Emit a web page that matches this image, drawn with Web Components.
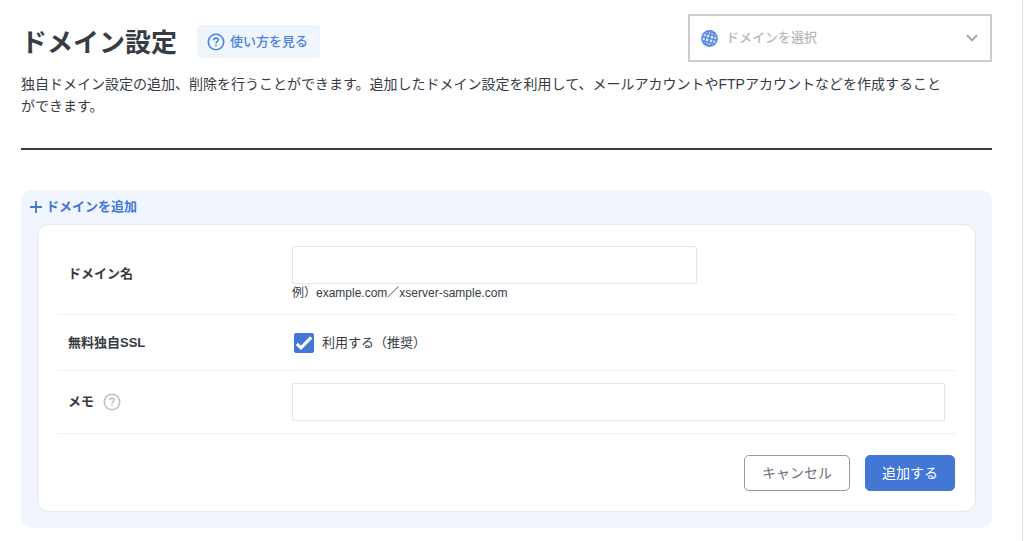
<!DOCTYPE html>
<html lang="ja">
<head>
<meta charset="utf-8">
<meta name="viewport" content="width=device-width, initial-scale=1">
<title>ドメイン設定</title>
<style>
  html {
    --ink: #363b44;
    --blue: #4277d6;
    --line: #e8e8e8;
    background: #fff;
  }
  body {
    margin: 0 1px 0 0;
    color: var(--ink);
    font: 13px/22px "Liberation Sans", "Noto Sans CJK JP", sans-serif;
  }
</style>
</head>
<body>
<domain-page></domain-page>

<template id="t-page">
  <style>
    :host { display: block; box-sizing: border-box; min-height: 100vh; padding: 14px 30px 13px 21px; border-right: 1px solid #e0e0e0; }
    header { display: flex; align-items: center; gap: 20px; }
    h1 { margin: 0; font-size: 26px; line-height: 36px; padding-top: 8px; }
    domain-picker { margin-left: auto; margin-bottom: 1px; }
    p { margin: 10px 0 0; font-size: 14px; line-height: 22px; }
    hr { margin: 31px 0 40px; border: 0; height: 2px; background: var(--ink); }
    help-link { margin-top: 6px; }
  </style>
  <header>
    <h1>ドメイン設定</h1>
    <help-link>使い方を見る</help-link>
    <domain-picker></domain-picker>
  </header>
  <p>独自ドメイン設定の追加、削除を行うことができます。追加したドメイン設定を利用して、メールアカウントやFTPアカウントなどを作成すること<br>ができます。</p>
  <hr>
  <add-panel><add-form></add-form></add-panel>
</template>

<template id="t-question">
  <style>
    :host { display: inline-flex; }
    svg { display: block; }
  </style>
  <svg width="18" height="18" viewBox="0 0 18 18" fill="none" stroke="currentColor" stroke-width="1.6" aria-hidden="true">
    <circle cx="9" cy="9" r="7.7"/>
    <path d="M6.8 7.2C6.8 5.9 7.7 5.1 9 5.1s2.2.8 2.2 2c0 1.5-2.2 1.7-2.2 3.3"/>
    <path d="M9 11.7v1.6"/>
  </svg>
</template>

<template id="t-help">
  <style>
    :host { display: block; }
    a { display: flex; align-items: center; gap: 5px; box-sizing: border-box; height: 33px; padding: 0 12px 0 10px; border-radius: 4px; background: #f0f5fb; color: #4a80df; font-size: 13px; font-weight: 500; text-decoration: none; }
  </style>
  <a href="#help"><question-icon></question-icon><slot></slot></a>
</template>

<template id="t-picker">
  <style>
    :host { display: block; position: relative; width: 304px; }
    select { display: block; box-sizing: border-box; width: 100%; height: 48px; padding: 0 36px; border: 2px solid #ccc; border-radius: 0; background: #fff; color: #b8b8b8; font: inherit; font-weight: 500; appearance: none; }
    svg { position: absolute; top: 0; bottom: 0; margin: auto 0; pointer-events: none; }
    .globe { left: 13px; color: #5b8be0; }
    .arrow { right: 14px; }
  </style>
  <select aria-label="ドメインを選択"><option>ドメインを選択</option></select>
  <svg class="globe" width="17" height="17" viewBox="0 0 17 17" aria-hidden="true">
    <circle cx="8.5" cy="8.5" r="8.4" fill="currentColor"/>
    <g transform="rotate(14 8.5 8.5)" fill="#fff" fill-opacity=".8">
      <path d="M5.4 5.4h2.3v2.3H5.1zM9.3 5.4h2.3l.3 2.3H9.3zM5.1 9.3h2.6v2.3H5.4zM9.3 9.3h2.6l-.3 2.3H9.3z"/>
      <path d="M2.4 5.5h1.7l-.3 2.2H1.8zM12.9 5.5h1.7l.6 2.2h-2zM1.8 9.3h2l.3 2.2H2.4zM13.2 9.3h2l-.6 2.2h-1.7z"/>
      <path d="M7.7 1.8v2.3H5.9zM9.3 1.8v2.3h1.8zM7.7 15.2v-2.3H5.9zM9.3 15.2v-2.3h1.8zM3.3 4.1l1.8-1.6-.8 1.6zM13.7 4.1l-1.8-1.6.8 1.6zM3.3 12.9l1.8 1.6-.8-1.6zM13.7 12.9l-1.8 1.6.8-1.6z"/>
    </g>
  </svg>
  <svg class="arrow" width="12" height="8" viewBox="0 0 12 8" fill="none" stroke="#a9a9a9" stroke-width="2" aria-hidden="true"><path d="M1 1.3l5 5 5-5"/></svg>
</template>

<template id="t-panel">
  <style>
    :host { display: block; padding: 0 16px 16px; border-radius: 10px; background: #f1f5fd; }
    h2 { display: flex; align-items: center; gap: 4px; margin: 0 0 0 -7px; height: 34px; color: var(--blue); font-size: 13px; line-height: 34px; }
    .card { border: 1px solid var(--line); border-radius: 12px; background: #fff; padding: 9px 20px 20px; }
  </style>
  <h2><svg width="12" height="12" viewBox="0 0 12 12" stroke="currentColor" stroke-width="1.8" aria-hidden="true"><path d="M6 0v12M0 6h12"/></svg>ドメインを追加</h2>
  <div class="card"><slot></slot></div>
</template>

<template id="t-row">
  <style>
    :host { display: grid; grid-template-columns: 224px 1fr; align-items: center; box-sizing: border-box; min-height: 56px; padding: 12px 10px; border-bottom: 1px solid #f0f0f0; }
    .label { display: flex; align-items: center; gap: 9px; font-weight: bold; }
  </style>
  <div class="label"><slot name="label"></slot></div>
  <div><slot></slot></div>
</template>

<template id="t-form">
  <style>
    :host { display: block; }
    form { margin: 0; }
    .text { display: block; box-sizing: border-box; width: 100%; height: 38px; padding: 0 10px; border: 1px solid #e4e4e4; border-radius: 2px; background: #fff; color: inherit; font: inherit; }
    .domain { width: 62%; }
    .hint { display: block; font-size: 12px; line-height: 18px; }
    question-icon { color: #bfbfbf; }
    .actions { display: flex; justify-content: flex-end; gap: 15px; padding-top: 21px; }
  </style>
  <form>
    <form-row>
      <label slot="label" for="domain">ドメイン名</label>
      <input class="text domain" id="domain" type="text" aria-describedby="hint">
      <span class="hint" id="hint">例）example.com／xserver-sample.com</span>
    </form-row>
    <form-row>
      <span slot="label">無料独自SSL</span>
      <check-box>利用する（推奨）</check-box>
    </form-row>
    <form-row>
      <label slot="label" for="memo">メモ</label>
      <question-icon slot="label"></question-icon>
      <input class="text" id="memo" type="text">
    </form-row>
    <div class="actions">
      <push-button>キャンセル</push-button>
      <push-button primary>追加する</push-button>
    </div>
  </form>
</template>

<template id="t-check">
  <style>
    :host { display: block; }
    label { display: flex; align-items: center; gap: 8px; padding-left: 2px; }
    .box { display: grid; }
    input, svg { grid-area: 1 / 1; }
    input { appearance: none; width: 20px; height: 20px; margin: 0; border: 1px solid var(--blue); border-radius: 2px; background: #fff; }
    input:checked { background: var(--blue); }
    input:not(:checked) + svg { visibility: hidden; }
    svg { pointer-events: none; z-index: 1; }
  </style>
  <label>
    <span class="box"><input type="checkbox" checked><svg width="20" height="20" viewBox="0 0 20 20" fill="none" stroke="#fff" stroke-width="3.2" aria-hidden="true"><path d="M2.8 10.8l4.2 4L17.2 4.4"/></svg></span>
    <slot></slot>
  </label>
</template>

<template id="t-button">
  <style>
    :host { display: block; }
    button { display: block; box-sizing: border-box; height: 36px; padding: 0 17px; border: 1px solid #999; border-radius: 5px; background: #fff; color: #6b727c; font: inherit; font-size: 14px; }
    :host([primary]) button { padding: 0 16px; border-color: var(--blue); background: var(--blue); color: #fff; }
  </style>
  <button type="button"><slot></slot></button>
</template>

<script>
  const define = (name, templateId) => {
    customElements.define(name, class extends HTMLElement {
      constructor() {
        super();
        this.attachShadow({ mode: "open" })
          .append(document.getElementById(templateId).content.cloneNode(true));
      }
    });
  };
  define("question-icon", "t-question");
  define("help-link", "t-help");
  define("domain-picker", "t-picker");
  define("add-panel", "t-panel");
  define("form-row", "t-row");
  define("check-box", "t-check");
  define("push-button", "t-button");
  define("add-form", "t-form");
  define("domain-page", "t-page");
</script>
</body>
</html>
